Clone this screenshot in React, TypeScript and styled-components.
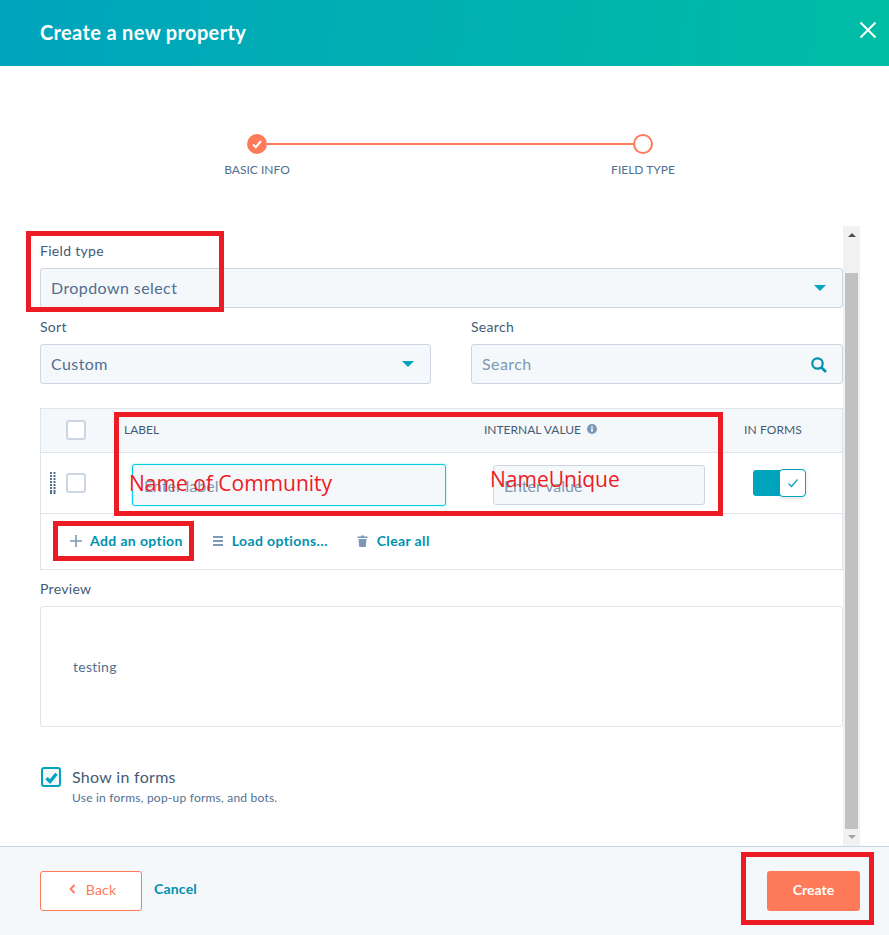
import React from "react";
import styled, { createGlobalStyle } from "styled-components";

const Global = createGlobalStyle`
  html, body { margin: 0; padding: 0; background: #fff; }
  * { box-sizing: border-box; }
  body { font-family: Lato, "Open Sans", sans-serif; color: #33475b; }
`;

const Page = styled.div`
  position: relative;
  width: 889px;
  height: 935px;
  display: flex;
  flex-direction: column;
  overflow: hidden;
  background: #fff;
`;

const Header = styled.header`
  height: 66px;
  flex: none;
  display: flex;
  align-items: center;
  justify-content: space-between;
  padding: 0 11px 2px 40px;
  background: linear-gradient(95deg, #00a4bd 0%, #00bda5 100%);
`;

const Title = styled.h1`
  margin: 0;
  font-size: 20px;
  font-weight: 700;
  color: #fff;
  letter-spacing: 0.35px;
`;

const CloseIcon = styled.svg`
  width: 20px;
  height: 20px;
  margin-top: -4px;
`;

const Stepper = styled.section`
  height: 160px;
  flex: none;
  padding: 68px 0 0 11px;
  display: flex;
  flex-direction: column;
  align-items: center;
`;

const StepTrack = styled.div`
  display: flex;
  align-items: center;
`;

const StepDone = styled.div`
  width: 20px;
  height: 20px;
  border-radius: 50%;
  background: #ff7a59;
  display: flex;
  align-items: center;
  justify-content: center;
`;

const StepLine = styled.div`
  width: 366px;
  height: 2px;
  background: #ff7a59;
`;

const StepOpen = styled.div`
  width: 20px;
  height: 20px;
  border-radius: 50%;
  border: 2px solid #ff7a59;
`;

const StepLabels = styled.div`
  display: flex;
  gap: 286px;
  margin-top: 8px;
`;

const StepLabel = styled.div`
  width: 100px;
  text-align: center;
  font-size: 12px;
  line-height: 16px;
  color: #516f90;
`;

const Body = styled.div`
  flex: 1;
  min-height: 0;
  display: flex;
  padding-right: 29px;
`;

const Content = styled.main`
  flex: 1;
  min-width: 0;
  padding: 17px 0 0 40px;
`;

const FieldLabel = styled.label`
  display: block;
  font-size: 14px;
  line-height: 16px;
  letter-spacing: 0.3px;
  margin-bottom: 9px;
  color: #425b76;
`;

const SelectBox = styled.div`
  height: 40px;
  display: flex;
  align-items: center;
  justify-content: space-between;
  padding: 0 16px 2px 10px;
  font-size: 16px;
  letter-spacing: 0.42px;
  color: #516f90;
  background: #f5f8fa;
  border: 1px solid #cbd6e2;
  border-radius: 3px;
`;

const Caret = styled.span`
  width: 0;
  height: 0;
  margin-top: 2px;
  border-left: 6px solid transparent;
  border-right: 6px solid transparent;
  border-top: 6px solid #00a4bd;
`;

const SearchIcon = styled.svg`
  width: 18px;
  height: 18px;
  margin: 4px -2px 0 0;
`;

const TwoCols = styled.div`
  display: grid;
  grid-template-columns: 391px 372px;
  column-gap: 40px;
  margin-top: 11px;
`;

const SearchText = styled.span`
  color: #7c98b6;
`;

const Table = styled.div`
  margin-top: 24px;
  border: 1px solid #dfe3eb;
`;

const HeadRow = styled.div`
  height: 44px;
  display: flex;
  align-items: center;
  background: #f5f8fa;
  border-bottom: 1px solid #dfe3eb;
  font-size: 12px;
  color: #425b76;
`;

const BodyRow = styled.div`
  height: 61px;
  display: flex;
  align-items: center;
  border-bottom: 1px solid #dfe3eb;
`;

const Box = styled.span`
  width: 20px;
  height: 20px;
  flex: none;
  background: #fff;
  border: 2px solid #cbd6e2;
  border-radius: 3px;
`;

const HeadBox = styled(Box)`
  margin: -2px 0 0 25px;
`;

const HeadLabel = styled.span`
  margin-left: 38px;
  width: 360px;
  margin-top: -3px;
`;

const HeadValue = styled.span`
  width: 260px;
  display: flex;
  align-items: center;
  gap: 6px;
  margin-top: -3px;
`;

const HeadForms = styled.span`
  margin-top: -3px;
  letter-spacing: 0.1px;
`;

const Grip = styled.svg`
  width: 6px;
  height: 22px;
  margin-left: 9px;
  flex: none;
`;

const RowBox = styled(Box)`
  margin-left: 10px;
`;

const LabelInput = styled.div`
  width: 314px;
  height: 42px;
  margin: 4px 0 0 46px;
  padding: 0 11px;
  display: flex;
  align-items: center;
  font-size: 16px;
  color: #7c98b6;
  background: #f5f8fa;
  border: 1px solid #00d0e4;
  border-radius: 3px;
  box-shadow: 0 0 2px rgba(0, 208, 228, 0.5);
`;

const ValueInput = styled.div`
  width: 212px;
  height: 40px;
  margin: 4px 0 0 47px;
  padding: 0 10px;
  display: flex;
  align-items: center;
  font-size: 16px;
  color: #7c98b6;
  background: #f5f8fa;
  border: 1px solid #cbd6e2;
  border-radius: 3px;
`;

const Toggle = styled.div`
  width: 53px;
  height: 28px;
  margin-left: 48px;
  display: flex;
  align-items: center;
`;

const ToggleFill = styled.div`
  width: 28px;
  height: 26px;
  background: #00a4bd;
  border-radius: 3px 0 0 3px;
`;

const ToggleKnob = styled.div`
  width: 27px;
  height: 28px;
  margin-left: -2px;
  background: #fff;
  border: 1px solid #00a4bd;
  border-radius: 4px;
  display: flex;
  align-items: center;
  justify-content: center;
  box-shadow: 0 2px 4px rgba(45, 62, 80, 0.14);
`;

const Toolbar = styled.div`
  height: 55px;
  display: flex;
  align-items: center;
  padding: 0 0 2px 29px;
`;

const ToolButton = styled.span<{ $gap: number; $mr: number }>`
  display: flex;
  align-items: center;
  gap: ${(p) => p.$gap}px;
  margin-right: ${(p) => p.$mr}px;
  font-size: 14px;
  font-weight: 700;
  letter-spacing: 0.38px;
  color: #0091ae;
`;

const PreviewLabel = styled(FieldLabel)`
  margin: 11px 0 9px;
`;

const PreviewBox = styled.div`
  height: 121px;
  padding-left: 32px;
  display: flex;
  align-items: center;
  font-size: 14px;
  letter-spacing: 0.25px;
  color: #516f90;
  border: 1px solid #dfe3eb;
  border-radius: 3px;
`;

const FormsOption = styled.div`
  display: flex;
  gap: 11px;
  margin: 40px 0 0 1px;
`;

const CheckedBox = styled.span`
  width: 20px;
  height: 20px;
  flex: none;
  display: flex;
  align-items: center;
  justify-content: center;
  background: #f5f8fa;
  border: 2px solid #00a4bd;
  border-radius: 3px;
`;

const OptionTitle = styled.div`
  font-size: 16px;
  line-height: 20px;
  letter-spacing: 0.3px;
  color: #425b76;
`;

const OptionHint = styled.div`
  font-size: 12px;
  line-height: 16px;
  letter-spacing: 0.22px;
  margin-top: 3px;
  color: #516f90;
`;

const Scrollbar = styled.aside`
  width: 17px;
  flex: none;
  display: flex;
  flex-direction: column;
  align-items: center;
  background: #f1f1f1;
`;

const ArrowUp = styled.span`
  margin-top: 7px;
  width: 0;
  height: 0;
  border-left: 4px solid transparent;
  border-right: 4px solid transparent;
  border-bottom: 4px solid #505050;
`;

const Thumb = styled.div`
  width: 13px;
  height: 556px;
  margin-top: 36px;
  background: #c1c1c1;
`;

const ArrowDown = styled.span`
  margin-top: 6px;
  width: 0;
  height: 0;
  border-left: 4px solid transparent;
  border-right: 4px solid transparent;
  border-top: 4px solid #a3a3a3;
`;

const Footer = styled.footer`
  height: 89px;
  flex: none;
  display: flex;
  align-items: flex-start;
  padding: 24px 29px 0 40px;
  background: #f5f8fa;
  border-top: 1px solid #cbd6e2;
`;

const BackButton = styled.button`
  width: 102px;
  height: 40px;
  display: flex;
  align-items: center;
  justify-content: center;
  gap: 10px;
  padding: 0 0 4px 3px;
  font: 400 14px Lato, sans-serif;
  letter-spacing: 0.2px;
  color: #ff7a59;
  background: #fff;
  border: 1px solid #ff7a59;
  border-radius: 3px;
`;

const CancelLink = styled.span`
  margin: 9px 0 0 12px;
  font-size: 14px;
  line-height: 17px;
  font-weight: 700;
  letter-spacing: 0.2px;
  color: #0091ae;
`;

const CreateButton = styled.button`
  width: 93px;
  height: 40px;
  margin-left: auto;
  padding: 0 0 3px;
  font: 700 14px Lato, sans-serif;
  color: #fff;
  background: #ff7a59;
  border: 0;
  border-radius: 3px;
`;

const Annotation = styled.div<{ $x: number; $y: number; $w: number; $h: number }>`
  position: absolute;
  left: ${(p) => p.$x}px;
  top: ${(p) => p.$y}px;
  width: ${(p) => p.$w}px;
  height: ${(p) => p.$h}px;
  border: 5px solid #ed1c24;
  pointer-events: none;
`;

const AnnotationText = styled.div<{ $x: number; $y: number }>`
  position: absolute;
  left: ${(p) => p.$x}px;
  top: ${(p) => p.$y}px;
  font-family: "Open Sans", sans-serif;
  font-size: 21px;
  line-height: 28px;
  color: #ed1c24;
  white-space: nowrap;
`;

const Check = ({ size, color, width }: { size: number; color: string; width: number }) => (
  <svg width={size} height={size} viewBox="0 0 12 12" fill="none">
    <path d="M2 6.5 L4.8 9.2 L10 3" stroke={color} strokeWidth={width} />
  </svg>
);

export default function App() {
  return (
    <Page>
      <Global />
      <Header>
        <Title>Create a new property</Title>
        <CloseIcon viewBox="0 0 20 20" fill="none">
          <path d="M2.5 2.5 L17.5 17.5 M17.5 2.5 L2.5 17.5" stroke="#fff" strokeWidth="2" />
        </CloseIcon>
      </Header>

      <Stepper>
        <StepTrack>
          <StepDone>
            <Check size={12} color="#fff" width={2} />
          </StepDone>
          <StepLine />
          <StepOpen />
        </StepTrack>
        <StepLabels>
          <StepLabel>BASIC INFO</StepLabel>
          <StepLabel>FIELD TYPE</StepLabel>
        </StepLabels>
      </Stepper>

      <Body>
        <Content>
          <FieldLabel>Field type</FieldLabel>
          <SelectBox>
            Dropdown select
            <Caret />
          </SelectBox>
          <TwoCols>
            <div>
              <FieldLabel>Sort</FieldLabel>
              <SelectBox>
                Custom
                <Caret />
              </SelectBox>
            </div>
            <div>
              <FieldLabel>Search</FieldLabel>
              <SelectBox>
                <SearchText>Search</SearchText>
                <SearchIcon viewBox="0 0 18 18" fill="none">
                  <circle cx="7.5" cy="7.5" r="5.2" stroke="#0091ae" strokeWidth="2.2" />
                  <path d="M11.5 11.5 L16 16" stroke="#0091ae" strokeWidth="2.6" />
                </SearchIcon>
              </SelectBox>
            </div>
          </TwoCols>

          <Table>
            <HeadRow>
              <HeadBox />
              <HeadLabel>LABEL</HeadLabel>
              <HeadValue>
                INTERNAL VALUE
                <svg width="10" height="10" viewBox="0 0 10 10">
                  <circle cx="5" cy="5" r="5" fill="#7c98b6" />
                  <rect x="4.2" y="4.2" width="1.6" height="3.6" fill="#fff" />
                  <rect x="4.2" y="2.2" width="1.6" height="1.4" fill="#fff" />
                </svg>
              </HeadValue>
              <HeadForms>IN FORMS</HeadForms>
            </HeadRow>
            <BodyRow>
              <Grip viewBox="0 0 6 22">
                {[0, 3, 6, 9, 12, 15, 18, 20].map((y) => (
                  <g key={y} fill="#516f90">
                    <rect x="0" y={y} width="2" height="2" />
                    <rect x="3.5" y={y} width="2" height="2" />
                  </g>
                ))}
              </Grip>
              <RowBox />
              <LabelInput>Enter label</LabelInput>
              <ValueInput>Enter value</ValueInput>
              <Toggle>
                <ToggleFill />
                <ToggleKnob>
                  <svg width="12" height="12" viewBox="0 0 12 12" fill="none">
                    <path d="M1.5 6.5 L4.5 9.5 L10.5 2.5" stroke="#00a4bd" strokeWidth="1.2" />
                  </svg>
                </ToggleKnob>
              </Toggle>
            </BodyRow>
            <Toolbar>
              <ToolButton $gap={8} $mr={30}>
                <svg width="12" height="12" viewBox="0 0 12 12">
                  <path d="M6 0 V12 M0 6 H12" stroke="#7c98b6" strokeWidth="1.6" />
                </svg>
                Add an option
              </ToolButton>
              <ToolButton $gap={9} $mr={29}>
                <svg width="10" height="10" viewBox="0 0 10 10">
                  <path d="M0 1 H10 M0 5 H10 M0 9 H10" stroke="#7c98b6" strokeWidth="2.2" />
                </svg>
                Load options...
              </ToolButton>
              <ToolButton $gap={9} $mr={0}>
                <svg width="11" height="12" viewBox="0 0 11 12">
                  <path d="M0.5 1.5 H4 V0.5 H7 V1.5 H10.5 V3 H0.5 Z M1.5 4 H9.5 L8.8 12 H2.2 Z" fill="#7c98b6" />
                </svg>
                Clear all
              </ToolButton>
            </Toolbar>
          </Table>

          <PreviewLabel>Preview</PreviewLabel>
          <PreviewBox>testing</PreviewBox>

          <FormsOption>
            <CheckedBox>
              <Check size={15} color="#00a4bd" width={2.6} />
            </CheckedBox>
            <div>
              <OptionTitle>Show in forms</OptionTitle>
              <OptionHint>Use in forms, pop-up forms, and bots.</OptionHint>
            </div>
          </FormsOption>
        </Content>
        <Scrollbar>
          <ArrowUp />
          <Thumb />
          <ArrowDown />
        </Scrollbar>
      </Body>

      <Footer>
        <BackButton>
          <svg width="7" height="10" viewBox="0 0 7 10" fill="none">
            <path d="M5.5 1 L1.5 5 L5.5 9" stroke="#ff7a59" strokeWidth="1.8" />
          </svg>
          Back
        </BackButton>
        <CancelLink>Cancel</CancelLink>
        <CreateButton>Create</CreateButton>
      </Footer>

      <Annotation $x={26} $y={231} $w={198} $h={81} />
      <Annotation $x={114} $y={412} $w={609} $h={104} />
      <Annotation $x={53} $y={521} $w={141} $h={40} />
      <Annotation $x={741} $y={852} $w={133} $h={73} />
      <AnnotationText $x={129} $y={469}>Name of Community</AnnotationText>
      <AnnotationText $x={490} $y={465}>NameUnique</AnnotationText>
    </Page>
  );
}
